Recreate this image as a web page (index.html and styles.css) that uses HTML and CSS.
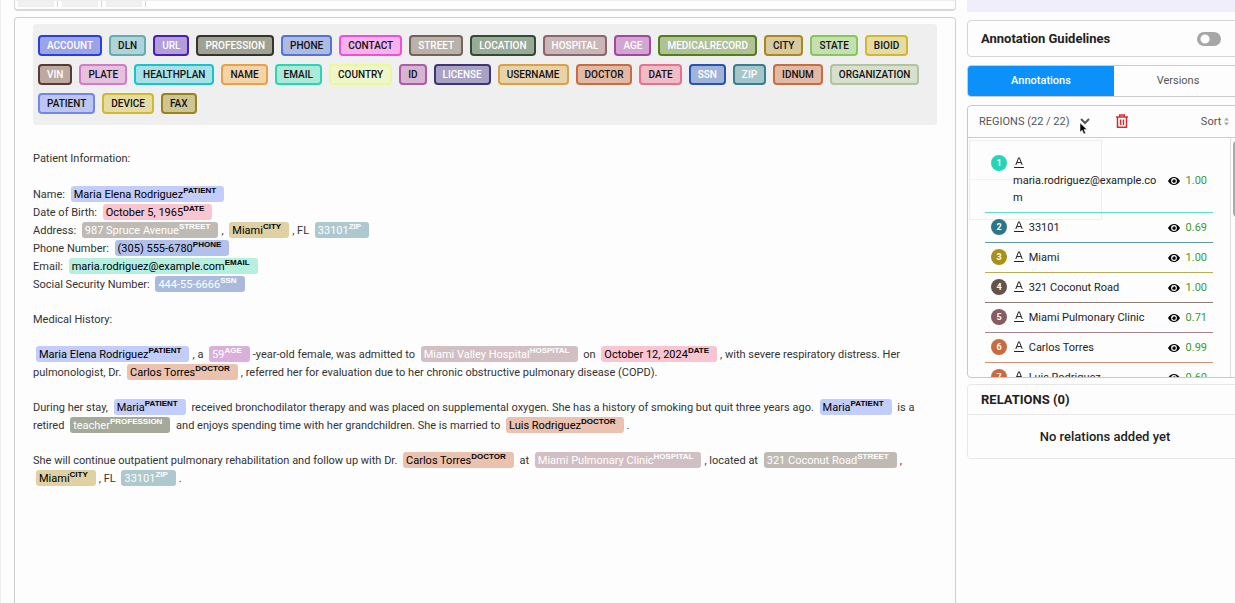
FILE: index.html
```
<!DOCTYPE html>
<html lang="en">
<head>
<meta charset="utf-8">
<title>Annotation</title>
<link rel="stylesheet" href="styles.css">
</head>
<body>
<svg class="defs" aria-hidden="true">
  <symbol id="eye" viewBox="0 0 12 8"><path fill-rule="evenodd" d="M0 4C1.500 1.300 3.600 0 6 0s4.500 1.300 6 4c-1.500 2.700-3.600 4-6 4S1.500 6.700 0 4zM6 1.100a2.900 2.900 0 1 0 0 5.800 2.900 2.900 0 0 0 0-5.800zM6 2.200a1.800 1.800 0 1 1-1.700 1.200.8.8 0 0 0 1.100-1.100A1.800 1.800 0 0 1 6 2.200z"/></symbol>
  <symbol id="glyph" viewBox="0 0 10 11"><path d="M1.800 8 4.600.8h.8L8.200 8M2.800 5.600h4.400M0 10.500h10" fill="none" stroke="currentColor"/></symbol>
</svg>
<div class="app">
  <main class="work">
    <div class="toolbar"><i></i><i></i><i></i></div>
    <section class="document">
      <div class="labels">
        <button class="account light">ACCOUNT</button><button class="dln">DLN</button><button class="url light">URL</button><button class="profession light">PROFESSION</button><button class="phone">PHONE</button><button class="contact">CONTACT</button><button class="street light">STREET</button><button class="location light">LOCATION</button><button class="hospital light">HOSPITAL</button><button class="age light">AGE</button><button class="record light">MEDICALRECORD</button><button class="city">CITY</button><button class="state">STATE</button><button class="bioid">BIOID</button>
        <button class="vin light">VIN</button><button class="plate">PLATE</button><button class="health">HEALTHPLAN</button><button class="name">NAME</button><button class="email">EMAIL</button><button class="country">COUNTRY</button><button class="id">ID</button><button class="license light">LICENSE</button><button class="username">USERNAME</button><button class="doctor">DOCTOR</button><button class="date">DATE</button><button class="ssn light">SSN</button><button class="zip light">ZIP</button><button class="doctor">IDNUM</button><button class="organization">ORGANIZATION</button>
        <button class="patient">PATIENT</button><button class="bioid">DEVICE</button><button class="fax">FAX</button>
      </div>
      <article class="text">
        <p>Patient Information:</p>
        <p class="facts">Name: <mark class="patient">Maria Elena Rodriguez<sup>PATIENT</sup></mark><br>
        Date of Birth: <mark class="date">October 5, 1965<sup>DATE</sup></mark><br>
        Address: <mark class="street light">987 Spruce Avenue<sup>STREET</sup></mark>, <mark class="city">Miami<sup>CITY</sup></mark>, FL <mark class="zip light">33101<sup>ZIP</sup></mark><br>
        Phone Number: <mark class="phone">(305) 555-6780<sup>PHONE</sup></mark><br>
        Email: <mark class="email">maria.rodriguez@example.com<sup>EMAIL</sup></mark><br>
        Social Security Number: <mark class="ssn light">444-55-6666<sup>SSN</sup></mark></p>
        <p>Medical History:</p>
        <p><mark class="patient">Maria Elena Rodriguez<sup>PATIENT</sup></mark>, a <mark class="age light">59<sup>AGE</sup></mark>-year-old female, was admitted to <mark class="hospital light">Miami Valley Hospital<sup>HOSPITAL</sup></mark> on <mark class="date">October 12, 2024<sup>DATE</sup></mark>, with severe respiratory distress. Her pulmonologist, Dr. <mark class="doctor">Carlos Torres<sup>DOCTOR</sup></mark>, referred her for evaluation due to her chronic obstructive pulmonary disease (COPD).</p>
        <p>During her stay, <mark class="patient">Maria<sup>PATIENT</sup></mark> received bronchodilator therapy and was placed on supplemental oxygen. She has a history of smoking but quit three years ago. <mark class="patient">Maria<sup>PATIENT</sup></mark> is a retired <mark class="profession light">teacher<sup>PROFESSION</sup></mark> and enjoys spending time with her grandchildren. She is married to <mark class="doctor">Luis Rodriguez<sup>DOCTOR</sup></mark>.</p>
        <p>She will continue outpatient pulmonary rehabilitation and follow up with Dr. <mark class="doctor">Carlos Torres<sup>DOCTOR</sup></mark> at <mark class="hospital light">Miami Pulmonary Clinic<sup>HOSPITAL</sup></mark>, located at <mark class="street light">321 Coconut Road<sup>STREET</sup></mark>, <mark class="city">Miami<sup>CITY</sup></mark>, FL <mark class="zip light">33101<sup>ZIP</sup></mark>.</p>
      </article>
    </section>
  </main>
  <aside class="side">
    <div class="notice"></div>
    <label class="card guidelines"><span>Annotation Guidelines</span><input type="checkbox" role="switch"></label>
    <div class="tabs"><button class="active">Annotations</button><button>Versions</button></div>
    <section class="card regions">
      <header>
        <span>REGIONS (22 / 22)</span>
        <button class="more" aria-label="Region options"><svg width="10" height="7" viewBox="0 0 10 7"><path d="m1 1 4 4 4-4" fill="none" stroke="#555" stroke-width="2"/></svg>
        <svg class="pointer" width="9" height="13" viewBox="0 0 9 13"><path d="M1 .8v9.400l2.200-2 1.600 3.800 1.800-.8L5 7.600h3.100z" fill="#000" stroke="#fff" stroke-width=".6"/></svg></button>
        <button class="trash" aria-label="Delete regions"><svg width="12" height="15" viewBox="0 0 12 15" fill="none" stroke="#d32f2f" stroke-width="1.500"><path d="M0 3h12M3.700 2.600V1h4.600v1.600M1.500 3v10.300h9V3"/><path d="M4.600 5.500v5.500M7.400 5.500v5.500"/></svg></button>
        <button class="sort">Sort <svg width="5" height="9" viewBox="0 0 5 9" fill="#aaa"><path d="M0 3.500 2.500.5 5 3.500zM0 5.500l2.500 3 2.500-3z"/></svg></button>
      </header>
      <div class="scroller">
        <div class="menu"><i></i><i></i></div>
        <ul>
          <li class="r1"><b>1</b><span><svg><use href="#glyph"/></svg> maria.rodriguez@example.com</span><svg class="eye"><use href="#eye"/></svg><em>1.00</em></li>
          <li class="r2"><b>2</b><span><svg><use href="#glyph"/></svg> 33101</span><svg class="eye"><use href="#eye"/></svg><em>0.69</em></li>
          <li class="r3"><b>3</b><span><svg><use href="#glyph"/></svg> Miami</span><svg class="eye"><use href="#eye"/></svg><em>1.00</em></li>
          <li class="r4"><b>4</b><span><svg><use href="#glyph"/></svg> 321 Coconut Road</span><svg class="eye"><use href="#eye"/></svg><em>1.00</em></li>
          <li class="r5"><b>5</b><span><svg><use href="#glyph"/></svg> Miami Pulmonary Clinic</span><svg class="eye"><use href="#eye"/></svg><em>0.71</em></li>
          <li class="r6"><b>6</b><span><svg><use href="#glyph"/></svg> Carlos Torres</span><svg class="eye"><use href="#eye"/></svg><em>0.99</em></li>
          <li class="r6"><b>7</b><span><svg><use href="#glyph"/></svg> Luis Rodriguez</span><svg class="eye"><use href="#eye"/></svg><em>0.60</em></li>
        </ul>
        <div class="track"><i></i></div>
      </div>
    </section>
    <section class="card relations"><h2>RELATIONS (0)</h2><p>No relations added yet</p></section>
  </aside>
</div>
</body>
</html>
```
FILE: styles.css
```
* { box-sizing: border-box; }
body { margin: 0; background: #fdfdfd; color: #333; font: 11px/18px Roboto, sans-serif; }
button { font: inherit; color: inherit; margin: 0; padding: 0; border: 0; background: none; }
.defs { display: none; }
.app { display: flex; gap: 11px; height: 100vh; overflow: hidden; padding-left: 13px; border-left: 1px solid #eee; }

/* Document */
.work { flex: 1; min-width: 0; display: flex; flex-direction: column; gap: 6px; }
.toolbar { display: flex; gap: 4px; height: 11px; padding: 0 3px; border: 1px solid #d8d8d8; border-top-color: #eee; border-bottom-width: 2px; border-radius: 0 0 4px 4px; }
.toolbar i { width: 40px; height: 6px; border-right: 1px solid #d8d8d8; background: linear-gradient(90deg, #f0f0f0 36px, transparent 36px); }
.document { flex: 1; padding: 6px 18px; border: 1px solid #d0d0d0; border-bottom: 0; border-radius: 4px 4px 0 0; }
.labels { display: flex; flex-wrap: wrap; gap: 8px 7px; padding: 11px 5px; border-radius: 4px; background: #efefef; }
.labels button { height: 21px; padding: 0 7px; border: 2px solid var(--line); border-radius: 4px; background: var(--fill); color: #111; font-size: 10px; font-weight: 500; line-height: 16px; }
.labels .light, .text .light { color: #fff; }
.text p { margin: 0 0 17px; }
.text { padding-top: 25px; }
.text .facts { margin-top: 18px; }
mark { margin: 0 3px; padding: 2px 8px 1px 3px; border-radius: 3px; background: var(--mark, var(--fill)); color: #000; white-space: nowrap; }
sup { font: bold 8px/0 "Liberation Sans", sans-serif; vertical-align: 5px; }

.account { --line: #2a3fe0; --fill: #9ba4e9; }
.dln { --line: #63adb5; --fill: #b1d3d7; }
.url { --line: #4a1fb5; --fill: #b19edb; }
.profession { --line: #34352a; --fill: #9fa193; --mark: #a5a999; }
.phone { --line: #5474d4; --fill: #adbae1; --mark: #b2c0ec; }
.contact { --line: #f04fd9; --fill: #f6b2ec; }
.street { --line: #776259; --fill: #b9b2ab; --mark: #bfbab4; }
.location { --line: #2e4d31; --fill: #9aaa98; }
.hospital { --line: #8d656c; --fill: #c9b6b9; --mark: #d1bfc3; }
.age { --line: #a348a1; --fill: #d3a6d1; --mark: #dbafdb; }
.record { --line: #527f16; --fill: #b0c197; }
.city { --line: #aa8720; --fill: #d7ca9c; --mark: #dfd1a3; }
.state { --line: #88c85a; --fill: #c6dfb0; }
.bioid { --line: #d2b92b; --fill: #e4dba5; }
.vin { --line: #573b34; --fill: #bda9a0; }
.plate { --line: #d47ac8; --fill: #e5c1e0; }
.health { --line: #12c5cf; --fill: #a9e1e6; }
.name { --line: #eaa044; --fill: #f5d4aa; }
.email { --line: #26d8b1; --fill: #abe9d9; --mark: #b4efdf; }
.country { --line: #e8fb94; --fill: #eff6cc; }
.id { --line: #ae5ba6; --fill: #d7b4d2; }
.license { --line: #403479; --fill: #aaa2c5; }
.username { --line: #dda046; --fill: #e8d2aa; }
.doctor { --line: #c96c40; --fill: #e2b9a5; --mark: #ebc2b0; }
.date { --line: #e8718d; --fill: #f0bdc7; --mark: #f9c5d0; }
.ssn { --line: #2455b4; --fill: #a2b3d9; --mark: #a9badd; }
.zip { --line: #35808f; --fill: #a5c5ca; --mark: #adc8ce; }
.organization { --line: #b0c49f; --fill: #d8dfcf; }
.patient { --line: #7088e8; --fill: #bcc6f0; --mark: #c3cdfb; }
.fax { --line: #9a8514; --fill: #cdc594; }

/* Sidebar */
.side { flex: 0 0 276px; margin-right: -8px; display: flex; flex-direction: column; }
.notice { flex: 0 0 12px; margin-bottom: 8px; background: #f0edfc; }
.card { border: 1px solid #d5d5d5; border-radius: 4px; }
.guidelines { display: flex; align-items: center; justify-content: space-between; height: 37px; padding: 0 21px 0 13px; color: #222; font-size: 13px; font-weight: 700; }
.guidelines input { appearance: none; width: 24px; height: 14px; margin: 0; border-radius: 7px; background: radial-gradient(circle at 8px 7px, #fff 4px, #a6a6a6 5px); }
.tabs { display: flex; height: 32px; margin: 8px 0; border: 1px solid #ccc; border-radius: 4px; overflow: hidden; }
.tabs button { flex: 1; color: #555; }
.tabs .active { flex: 0 0 146px; background: #0c91fb; color: #fff; font-weight: 500; }
.regions { height: 273px; border-color: #c8c8c8; overflow: hidden; }
.regions header { display: flex; align-items: center; height: 32px; padding: 0 13px 0 11px; border-bottom: 1px solid #ccc; color: #555; }
.more { position: relative; display: flex; margin: 0 26px 0 10px; }
.pointer { position: absolute; left: -1px; top: 4px; }
.trash { display: flex; }
.sort { margin-left: auto; }
.sort svg { vertical-align: -1px; }
.scroller { position: relative; display: flex; height: 240px; }
.menu { position: absolute; left: 1px; top: 2px; width: 133px; height: 80px; border: 1px solid #eee; }
.menu i { display: block; height: 39px; border-bottom: 1px solid #f2f2f2; }
.menu i:last-child { border: 0; }
.regions ul { position: relative; flex: 1; margin: 0; padding: 11px 17px 0; list-style: none; }
.regions li { display: flex; align-items: center; padding: 6px; border-bottom: 1px solid color-mix(in srgb, var(--tone) 75%, white); color: #222; line-height: 17px; }
.regions b { align-self: flex-start; flex: 0 0 16px; height: 16px; border-radius: 8px; margin-right: 6px; background: var(--tone); color: #fff; font-size: 9px; line-height: 16px; text-align: center; }
li span { flex: 1; min-width: 0; margin-right: 6px; overflow-wrap: anywhere; }
li span svg { width: 10px; height: 11px; margin: 0 2px 0 1px; vertical-align: -1px; }
.eye { width: 12px; height: 8px; margin-right: 6px; }
.regions em { color: #3a9a35; font-style: normal; }
.r1 { --tone: #24d6b6; } .r2 { --tone: #2b7788; } .r3 { --tone: #a99018; } .r4 { --tone: #65534a; } .r5 { --tone: #885b62; } .r6 { --tone: #c96a3f; }
.track { width: 12px; border-left: 1px solid #ddd; }
.track i { display: block; width: 8px; height: 76px; margin: 3px 0 0 2px; border-radius: 4px; background: #aaa; }
.relations { margin-top: 6px; border-color: #e8e8e8; color: #222; }
.relations h2 { margin: 0; padding: 5px 13px; border-bottom: 1px solid #e8e8e8; font-size: 13px; font-weight: 700; line-height: 19px; }
.relations p { margin: 0; padding: 12px 0; font-size: 13px; font-weight: 500; line-height: 19px; text-align: center; }
```
